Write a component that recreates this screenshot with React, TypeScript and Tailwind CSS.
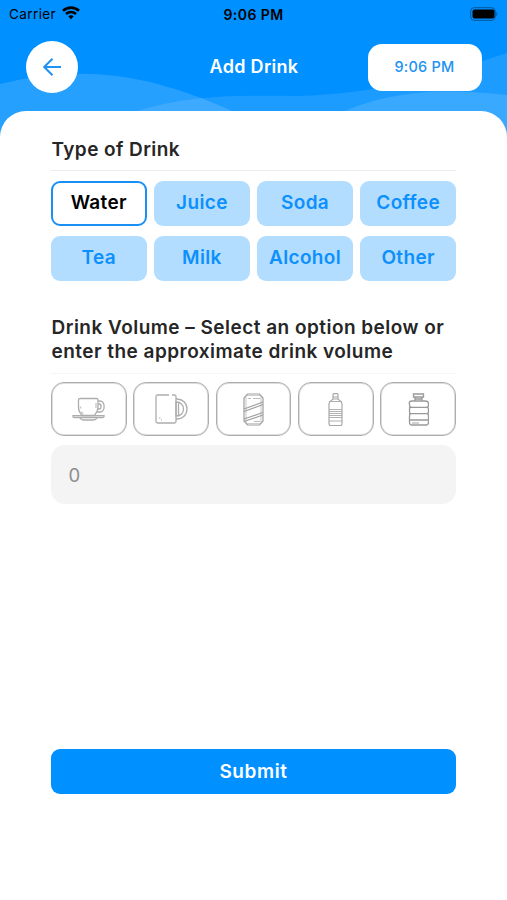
import { useState } from 'react';

const drinks = ['Water', 'Juice', 'Soda', 'Coffee', 'Tea', 'Milk', 'Alcohol', 'Other'];

function CupIcon() {
  return (
    <svg width="33" height="24" viewBox="0 0 33 24" fill="none" stroke="#adadad" strokeWidth="1.300">
      <path d="M8 1.500h16.500q1.500 0 1.500 1.500v7c0 4-1.500 6-3.500 8.500h-12C8 16.500 6.500 14 6.500 10V3q0-1.500 1.500-1.500z" />
      <path d="M26 4h2c5.500 0 5.500 11 0 11h-3M26 7h1.500c2 0 2 5 0 5H26" />
      <path d="M1 18.700h31v.8q0 1-1.500 1h-28q-1.500 0-1.500-1zM8 21c1 1.500 1.500 2 3.500 2h10c2 0 2.500-.5 3.500-2" />
      <path d="M8.500 9.500v2M9.500 14.500l1.500 2.500M24 6v5" opacity=".7" />
    </svg>
  );
}

function MugIcon() {
  return (
    <svg width="33" height="30" viewBox="0 0 33 30" fill="none" stroke="#adadad" strokeWidth="1.300">
      <path d="M14 1H2.500Q1 1 1 2.500v25Q1 29 2.500 29h17q1.500 0 1.500-1.500v-25Q21 1 19.500 1H17" />
      <path d="M21 5h1c5.500 0 10 4.200 10 10s-4.500 10-10 10h-1M21 8h.5c4 0 7 3 7 7s-3 7-7 7H21zM23.500 8.500v13" />
      <path d="M4 24h1.500M6 26h1" opacity=".7" />
    </svg>
  );
}

function CanIcon() {
  return (
    <svg width="21" height="33" viewBox="0 0 21 33" fill="none" stroke="#a0a0a0" strokeWidth="1.200">
      <path d="M4.500 1h12L20 5v23l-3.500 4h-12L1 28V5z" />
      <path d="M3 3.500v26M18 3.500v26M4 2.500h13M4 30.500h13" opacity=".5" />
      <path d="M1 16l19-7M1 18.500l19-7M1 26l19-6.500M1 28.500L20 22" />
      <path d="M5 5.500h3M10 5.500h7M11 28.500h6" opacity=".7" />
    </svg>
  );
}

function BottleIcon() {
  return (
    <svg width="15" height="33" viewBox="0 0 15 33" fill="none" stroke="#a8a8a8" strokeWidth="1.200">
      <path d="M5 1.600q0-1 1-1h3q1 0 1 1V6H5zM5 4h5M5 6c-1 1.500-4 1.500-4 5v19.500q0 2 1.500 2h10q1.500 0 1.500-2V11c0-3.500-3-3.500-4-5" />
      <path d="M1 8.500h13M1 16.500h13M1 18.500h13M1 20.500h13M1 22.500h13M1 24.500h13M1 28h13" strokeWidth=".9" />
    </svg>
  );
}

function JugIcon() {
  return (
    <svg width="21" height="33" viewBox="0 0 21 33" fill="none" stroke="#999" strokeWidth="1.300">
      <path d="M5.500 1h10v3h-10zM7 4v4M14 4v4M7 6h7" />
      <path d="M4 8h13q3.500 0 3.500 3v1q0 1.500-1 2 1 1 1 2.500v2q0 1.500-1 2 1 1 1 2.500v6q0 3-2 3h-15q-2 0-2-3v-6q0-1.500 1-2.500-1-.5-1-2v-2q0-1.500 1-2.500-1-.5-1-2v-1Q.5 8 4 8z" />
      <path d="M1 14.300h19M1 20.700h19M1 27h19" />
      <path d="M4 30h7" opacity=".7" />
    </svg>
  );
}

const volumes = [
  { ml: 200, name: 'Cup', Icon: CupIcon },
  { ml: 300, name: 'Mug', Icon: MugIcon },
  { ml: 330, name: 'Can', Icon: CanIcon },
  { ml: 500, name: 'Bottle', Icon: BottleIcon },
  { ml: 1000, name: 'Jug', Icon: JugIcon },
];

function Waves() {
  return (
    <svg className="absolute inset-x-0 top-0" width="507" height="150" viewBox="0 0 507 150" fill="#fff">
      <path d="M0 84C75 66 140 70 230 110L290 150H0z" fillOpacity=".15" />
      <path d="M100 125C175 92 235 96 300 96C380 93 430 78 507 53V150H100z" fillOpacity=".11" />
      <path d="M330 118C385 90 440 88 507 95V150H330z" fillOpacity=".13" />
    </svg>
  );
}

function StatusBar() {
  return (
    <div className="relative grid h-[28px] grid-cols-3 items-center px-[9px] text-black">
      <div className="flex items-center gap-[6px]">
        <span className="text-[13.5px] tracking-[0.4px]">Carrier</span>
        <svg className="-mt-[2px]" width="18" height="14" viewBox="0 0 18 14" fill="none" stroke="currentColor" strokeWidth="2.600">
          <path d="M1 4.800C5.500.6 12.500.6 17 4.800" />
          <path d="M4 8c2.800-2.600 7.200-2.600 10 0" />
          <path d="M6.300 10.300Q9 8.100 11.700 10.300L9 13.200z" fill="currentColor" stroke="none" />
        </svg>
      </div>
      <span className="text-center text-[14px] font-semibold tracking-[0.45px]">9:06 PM</span>
      <svg className="-mt-[1px] justify-self-end" width="28" height="14" viewBox="0 0 28 14">
        <rect x=".7" y=".7" width="24.600" height="12.600" rx="3.500" fill="none" stroke="#000" strokeOpacity=".4" />
        <rect x="2.500" y="2.500" width="22" height="9" rx="2" />
        <path d="M26.300 4.500q2 2.500 0 5z" fillOpacity=".4" />
      </svg>
    </div>
  );
}

export default function App() {
  const [drink, setDrink] = useState('Water');
  const [volume, setVolume] = useState('');

  return (
    <div className="relative flex h-[900px] w-[507px] flex-col overflow-hidden bg-[#0090ff] font-['Inter',sans-serif]">
      <Waves />
      <StatusBar />

      <header className="relative flex h-[82.500px] items-start justify-between pr-[25px] pl-[26px] pt-[13px]">
        <div className="flex w-[114px]">
          <button aria-label="Back" className="flex h-[52px] w-[52px] items-center justify-center rounded-full bg-white">
            <svg width="20" height="20" viewBox="0 0 20 20" fill="none" stroke="#2092f2" strokeWidth="2">
              <path d="M19 10H2.500M10.500 1.700L2.200 10l8.300 8.300" />
            </svg>
          </button>
        </div>
        <h1 className="mt-[13px] text-[18px] leading-[26px] font-semibold tracking-[0.3px] text-white">Add Drink</h1>
        <button className="mt-[2.500px] h-[47px] w-[114px] rounded-[14px] bg-white pr-[1px] text-[14.5px] font-medium tracking-[0.25px] text-[#2092f2]">
          9:06 PM
        </button>
      </header>

      <main className="relative flex flex-1 flex-col rounded-t-[26px] bg-white px-[51px] pt-[26px]">
        <h2 className="h-[34px] border-b border-[#ececec] pl-[0.5px] text-[19px] leading-[26px] font-semibold tracking-[0.42px] text-[#262626]">
          Type of Drink
        </h2>
        <div className="mt-[10px] grid grid-cols-4 gap-x-[7.500px] gap-y-[10px]">
          {drinks.map((name) => (
            <button
              key={name}
              onClick={() => setDrink(name)}
              className={`h-[45px] rounded-[9px] pt-[1px] text-[19px] font-semibold tracking-[0.35px] ${
                drink === name
                  ? 'border-[2.5px] border-[#1a90f5] bg-white text-black'
                  : 'bg-[#b2ddff] text-[#0d90fb]'
              }`}
            >
              {name}
            </button>
          ))}
        </div>

        <h2 className="mt-[35.500px] h-[58px] border-b border-[#f6f6f6] pl-[0.5px] text-[19px] leading-[23.500px] font-semibold tracking-[0.47px] whitespace-nowrap text-[#262626]">
          Drink Volume – Select an option below or
          <br />
          enter the approximate drink volume
        </h2>
        <div className="mt-[8px] grid grid-cols-5 gap-[6.300px]">
          {volumes.map(({ ml, name, Icon }) => (
            <button
              key={name}
              aria-label={name}
              onClick={() => setVolume(String(ml))}
              className="flex h-[54px] items-center justify-center rounded-[13px] border border-[#adadad] shadow-[inset_0_0_0_1px_#dedede]"
            >
              <Icon />
            </button>
          ))}
        </div>
        <input
          value={volume}
          onChange={(e) => setVolume(e.target.value)}
          placeholder="0"
          className="mt-[9px] h-[59px] rounded-[14px] bg-[#f4f4f4] px-[17.5px] text-[18.5px] text-[#333] placeholder:text-[#8c8c8c]"
        />
        <button className="mt-auto mb-[106px] h-[45px] rounded-[9px] bg-[#0090ff] pt-[1px] text-[19px] font-semibold tracking-[0.6px] text-white">
          Submit
        </button>
      </main>
    </div>
  );
}
